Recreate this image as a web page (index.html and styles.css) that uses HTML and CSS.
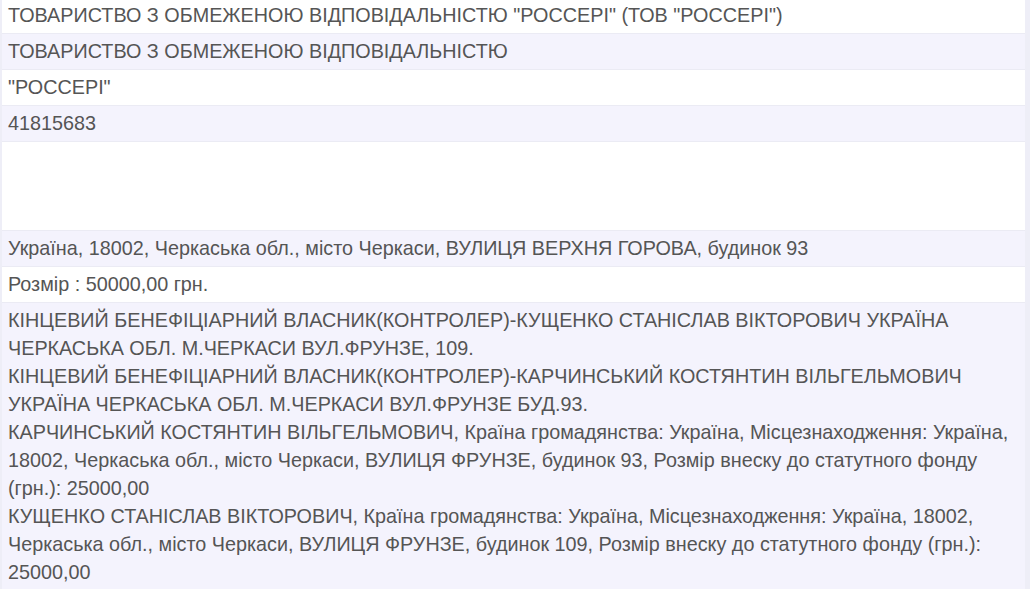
FILE: index.html
```html
<!DOCTYPE html>
<html lang="uk">
<head>
<meta charset="utf-8">
<link rel="stylesheet" href="styles.css">
<title>ТОВ "РОССЕРІ"</title>
</head>
<body>
<div class="sheet">
  <div class="row white first">ТОВАРИСТВО З ОБМЕЖЕНОЮ ВІДПОВІДАЛЬНІСТЮ "РОССЕРІ" (ТОВ "РОССЕРІ")</div>
  <div class="row">ТОВАРИСТВО З ОБМЕЖЕНОЮ ВІДПОВІДАЛЬНІСТЮ</div>
  <div class="row white">"РОССЕРІ"</div>
  <div class="row">41815683</div>
  <div class="row white blank"></div>
  <div class="row">Україна, 18002, Черкаська обл., місто Черкаси, ВУЛИЦЯ ВЕРХНЯ ГОРОВА, будинок 93</div>
  <div class="row white">Розмір : 50000,00 грн.</div>
  <div class="row last">КІНЦЕВИЙ БЕНЕФІЦІАРНИЙ ВЛАСНИК(КОНТРОЛЕР)-КУЩЕНКО СТАНІСЛАВ ВІКТОРОВИЧ УКРАЇНА ЧЕРКАСЬКА ОБЛ. М.ЧЕРКАСИ ВУЛ.ФРУНЗЕ, 109.<br>КІНЦЕВИЙ БЕНЕФІЦІАРНИЙ ВЛАСНИК(КОНТРОЛЕР)-КАРЧИНСЬКИЙ КОСТЯНТИН ВІЛЬГЕЛЬМОВИЧ УКРАЇНА ЧЕРКАСЬКА ОБЛ. М.ЧЕРКАСИ ВУЛ.ФРУНЗЕ БУД.93.<br>КАРЧИНСЬКИЙ КОСТЯНТИН ВІЛЬГЕЛЬМОВИЧ, Країна громадянства: Україна, Місцезнаходження: Україна, 18002, Черкаська обл., місто Черкаси, ВУЛИЦЯ ФРУНЗЕ, будинок 93, Розмір внеску до статутного фонду (грн.): 25000,00<br>КУЩЕНКО СТАНІСЛАВ ВІКТОРОВИЧ, Країна громадянства: Україна, Місцезнаходження: Україна, 18002, Черкаська обл., місто Черкаси, ВУЛИЦЯ ФРУНЗЕ, будинок 109, Розмір внеску до статутного фонду (грн.): 25000,00</div>
</div>
</body>
</html>
```
FILE: styles.css
```css
html, body {
  margin: 0;
  padding: 0;
  background: #eeeef7;
  height: 100%;
  overflow: hidden;
}
.sheet {
  margin-left: 2px;
  width: 1023px;
  margin-top: -2px;
  display: flex;
  flex-direction: column;
  font-family: "Liberation Sans", Arial, Helvetica, sans-serif;
  font-size: 19.8px;
  line-height: 28px;
  color: #555555;
}
.row {
  background: #f4f3fd;
  padding: 3px 4px 4px 6px;
  border-bottom: 1px solid #ebebf4;
  min-height: 28px;
}
.row.white {
  background: #ffffff;
}
.row.blank {
  height: 81px;
}
.row.last {
  padding-bottom: 12px;
}
```
